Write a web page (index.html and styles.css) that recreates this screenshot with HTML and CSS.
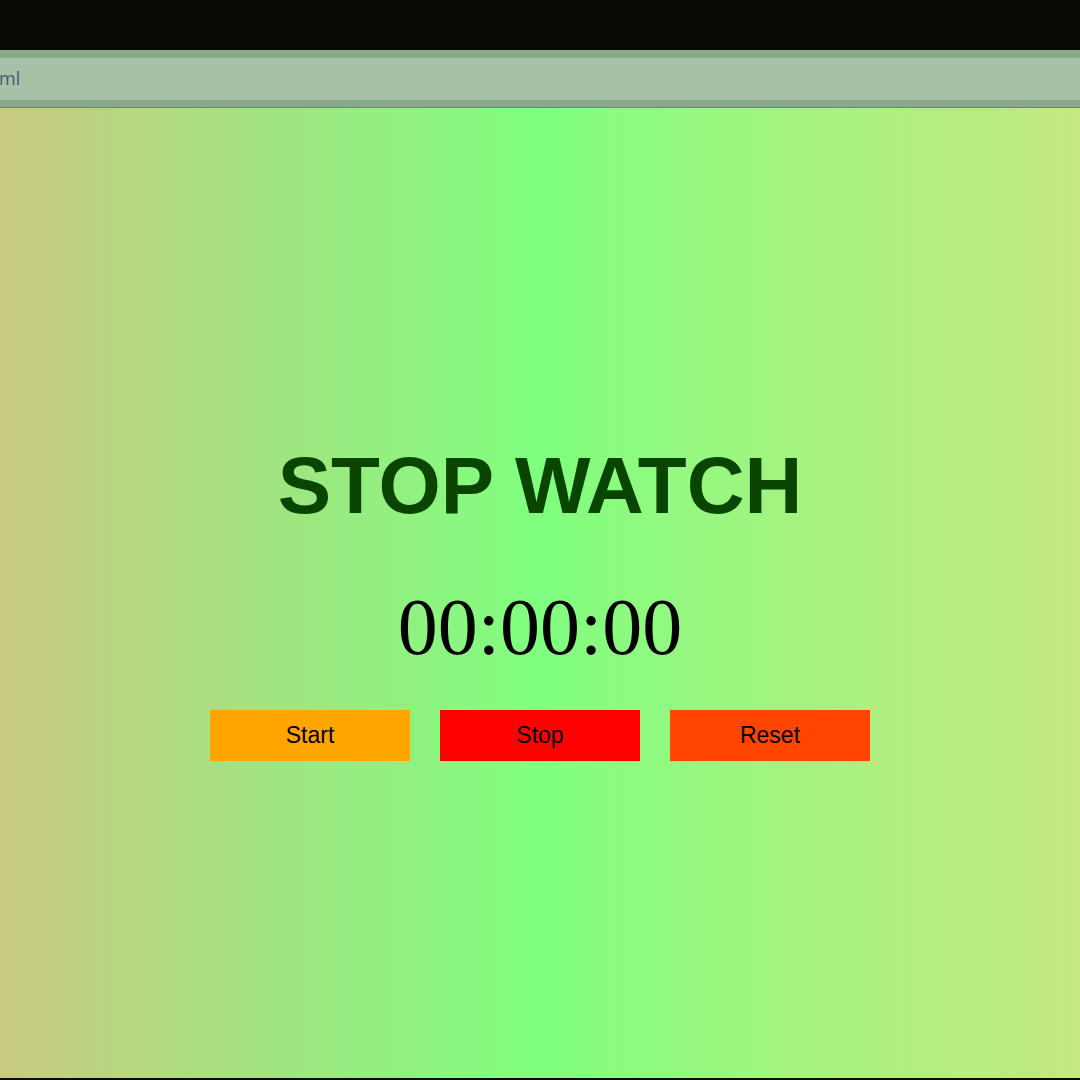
FILE: index.html
```html
<!DOCTYPE html>
<html>
<head>
<meta charset="utf-8">
<title>Stop Watch</title>
<link rel="stylesheet" href="styles.css">
</head>
<body>
<div class="chrome">
  <div class="topbar"></div>
  <div class="addressbar">
    <div class="url">ml</div>
  </div>
  <div class="chrome-line"></div>
</div>
<main class="page">
  <div class="watch">
    <h1 class="title">STOP WATCH</h1>
    <div class="time">00:00:00</div>
    <div class="buttons">
      <button class="btn btn-start">Start</button>
      <button class="btn btn-stop">Stop</button>
      <button class="btn btn-reset">Reset</button>
    </div>
  </div>
</main>
<div class="bottom-line"></div>
</body>
</html>
```
FILE: styles.css
```css
* { box-sizing: border-box; }
html, body {
  margin: 0;
  padding: 0;
  width: 1080px;
  height: 1080px;
  overflow: hidden;
  background: #0a0b06;
}
body {
  display: flex;
  flex-direction: column;
}
.chrome {
  flex: 0 0 auto;
}
.topbar {
  height: 50px;
  background: #0a0b06;
}
.addressbar {
  height: 57px;
  background: #a7c1a9;
  border-top: 8px solid #89a98a;
  border-bottom: 7px solid #89a98a;
  display: flex;
  align-items: center;
}
.url {
  font-family: "Open Sans", "Noto Sans", sans-serif;
  font-size: 18px;
  color: #4a5870;
  margin-left: -1px;
  line-height: 1;
  padding-bottom: 2px;
}
.chrome-line {
  height: 1px;
  background: #6b8a6c;
}
.page {
  flex: 1 1 auto;
  background: linear-gradient(to right, #c8ca80 0%, #a2e480 25%, #80ff80 50%, #a6f280 75%, #c4e883 100%);
  display: flex;
  justify-content: center;
}
.watch {
  display: flex;
  flex-direction: column;
  align-items: center;
  padding-top: 338px;
}
.title {
  margin: 0;
  font-family: "Liberation Sans", Arial, sans-serif;
  font-weight: bold;
  font-size: 80px;
  line-height: 1;
  color: #0a4500;
}
.time {
  margin-top: 61px;
  font-family: "Liberation Serif", "Times New Roman", serif;
  font-size: 80px;
  line-height: 1;
  color: #000;
}
.buttons {
  margin-top: 43px;
  display: flex;
  gap: 30px;
}
.btn {
  width: 200px;
  height: 51px;
  border: none;
  padding: 0;
  font-family: "Liberation Sans", Arial, sans-serif;
  font-size: 23px;
  color: #000;
  cursor: pointer;
}
.btn-start { background: #ffa500; }
.btn-stop { background: #ff0000; }
.btn-reset { background: #ff4500; }
.bottom-line {
  height: 2px;
  background: #0a0b06;
  flex: 0 0 auto;
}
```
